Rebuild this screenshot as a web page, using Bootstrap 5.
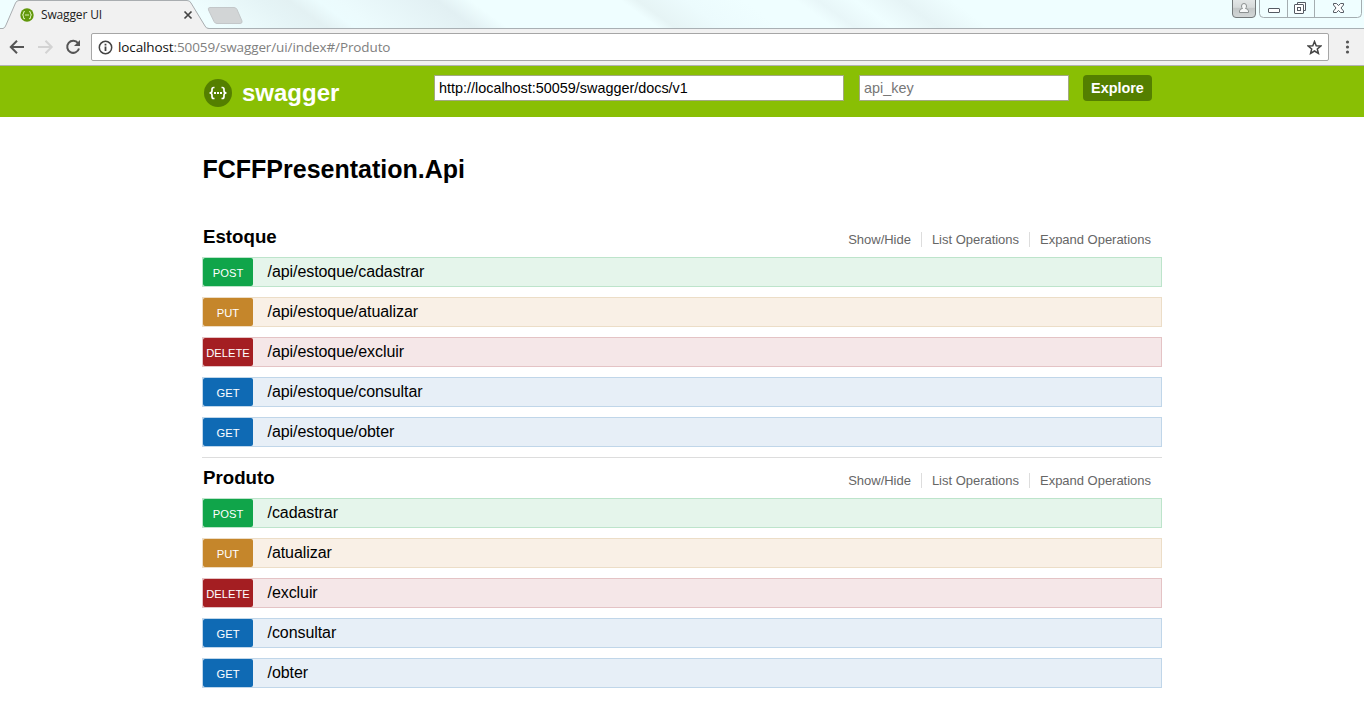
<!DOCTYPE html>
<html lang="pt-BR">
<head>
<meta charset="utf-8">
<meta name="viewport" content="width=device-width, initial-scale=1">
<title>Swagger UI</title>
<link href="https://cdn.jsdelivr.net/npm/bootstrap@5.3.0/dist/css/bootstrap.min.css" rel="stylesheet">
<style>
body{font-family:"Liberation Sans",Arial,sans-serif;color:#000;height:707px}
svg{display:block;flex:none}
.titlebar{height:29px;border-bottom:1px solid #a9b0b4;background:linear-gradient(36deg,#effeff 0,#effeff 130px,#e5f4f6 175px,#e3f1f3 192px,#ecfcfe 209px,#ecfbfd 220px,#e2f0f3 279px,#effeff 299px,#effeff 387px,#e6f4f5 397px,#ecfbfd 425px,#effeff 460px,#effeff 490px,#e8f6f8 503px,#effeff 525px,#e6f4f6 552px,#effeff 582px)}
.tab-shape{left:0;top:0}
.tab-label{font:12px "Open Sans","Noto Sans",sans-serif;letter-spacing:-.15px;left:41px;top:7px;line-height:16px;color:#222}
.win-buttons{left:1232px;top:0}
.toolbar{height:37px;background:#f1f1f1;border-bottom:1px solid #b3b3b3;padding:4px 9px 4px 9px}
.address{margin-left:10px;height:28px;border:1px solid #a6a6a6;border-radius:2px;padding:0 6px 0 6px;font:13.5px "Open Sans","Noto Sans",sans-serif;letter-spacing:-.11px;color:#808080}
.address b{font-weight:400;color:#111}
.url-text{margin-left:5px}
.site{width:960px;margin-left:202px}
.swagger-bar{height:51px;background:#89bf04;padding-top:9px}
.brand{margin-top:2px}
.brand-name{font-size:24px;font-weight:700;line-height:28px;margin:1px 0 0 10px;width:192px}
.field{height:26px;border:1px solid #a3a982;border-radius:0;padding:0 4px;font-size:14.4px;line-height:24px;color:#000}
.field::placeholder{color:#777}
.field-url{width:410px}
.field-key{width:210px;margin-left:15px}
.btn-explore{--bs-btn-color:#fff;--bs-btn-bg:#547f00;--bs-btn-border-width:0;margin-left:14px;width:69px;height:26px;padding:0;border-radius:4px;font-size:14.4px;font-weight:700;line-height:26px}
.api-title{font-size:25px;font-weight:700;line-height:30px;margin:37px 0 0 .5px}
.resource-head{height:40px;padding-right:1px}
.resource-head h2{font-size:18.7px;font-weight:700;line-height:22px;margin:9px 0 0 1px}
.options{font-size:13px;line-height:15px;color:#666;margin-top:15px;letter-spacing:-.02px}
.options li{padding:0 10px;border-left:1px solid #ddd}
.options li:first-child{border-left:0}
.first-resource{margin-top:33px}
.resource-line{border-top:1px solid #ddd;margin-top:10px}
.operation{height:30px;border:1px solid;margin-bottom:10px}
.operation:last-child{margin-bottom:0}
.verb{width:50px;height:28px;border-radius:2px;color:#fff;font-size:11.2px;line-height:30px}
.path{font-size:16px;letter-spacing:-.07px;line-height:27px;margin-left:14.500px}
.post{background:#e5f5eb;border-color:#bde4cb}.post .verb{background:#10a54a}
.put{background:#f9f0e6;border-color:#ecddc7}.put .verb{background:#c5862b}
.delete{background:#f5e7e8;border-color:#e4c3c5}.delete .verb{background:#a41e22}
.get{background:#e7eff7;border-color:#c0d6e9}.get .verb{background:#0f6ab4}
</style>
</head>
<body class="bg-white overflow-hidden">
<header>
  <div class="titlebar position-relative">
    <svg class="tab-shape position-absolute" width="250" height="29" viewBox="0 0 250 29">
      <path d="M0 28.5H3Q5 28 6 25L15.500 3Q16.500.5 19 .5H187Q190 .5 191 3L205 26Q206 28.500 209 28.500V29H0Z" fill="#f1f1f1"/>
      <path d="M0 28.500H3Q5 28 6 25L15.500 3Q16.500.5 19 .5H187Q190 .5 191 3L205 26Q206 28.500 209 28.500" fill="none" stroke="#a9adb0"/>
      <path d="M210 7.500H234Q236 7.500 237 9.500L242 21Q242.500 23.500 240 23.500H217Q215 23.500 214 21.500L208.500 10Q207.500 7.500 210 7.500Z" fill="#d2d5d6" stroke="#c3c7c9"/>
      <circle cx="27" cy="15" r="6.700" fill="#62980b"/>
      <path d="M25 11.500Q23.500 11.500 23.500 13T22.300 15Q23.500 15 23.500 17T25 18.500M29 11.500Q30.500 11.500 30.500 13T31.700 15Q30.500 15 30.500 17T29 18.500M25 15H29" fill="none" stroke="#d8edb2" stroke-width="1.100"/>
      <path d="M184.500 11.500L191.500 18.500M191.500 11.500L184.500 18.500" stroke="#444" stroke-width="1.700"/>
    </svg>
    <span class="tab-label position-absolute">Swagger UI</span>
    <svg class="win-buttons position-absolute" width="132" height="20" viewBox="0 0 132 20">
      <defs><linearGradient id="userFill" x1="0" y1="0" x2="0" y2="1"><stop offset="0" stop-color="#e4e8e8"/><stop offset=".45" stop-color="#d6dada"/><stop offset=".5" stop-color="#c3c7c7"/><stop offset="1" stop-color="#d4d8d8"/></linearGradient></defs>
      <path d="M.5-1V14Q.5 17.500 4 17.500H20Q23.500 17.500 23.500 14V-1Z" fill="url(#userFill)" stroke="#73797a"/>
      <path d="M7.500 12.500V11Q8 8.500 10.500 8.500Q9.500 7.500 9.500 6Q9.500 3.500 12 3.500T14.500 6Q14.500 7.500 13.500 8.500Q16 8.500 16.500 11V12.500Z" fill="#f6f8f8" stroke="#8b9090"/>
      <path d="M27.500-1V13.500Q27.500 17.500 31.500 17.500H125.500Q129.500 17.500 129.500 13.500V-1M55.500 0V17M82.500 0V17" fill="none" stroke="#a4adb0"/>
      <rect x="36.500" y="8.500" width="11" height="4" rx=".5" fill="#fff" stroke="#555b63"/>
      <path d="M65.500 4.500V2.500H73.500V10.500H71.500" fill="#fff" stroke="#555b63"/>
      <rect x="62.500" y="4.500" width="9" height="9" rx=".5" fill="#fff" stroke="#555b63"/><rect x="65.500" y="7.500" width="3" height="3" fill="none" stroke="#555b63"/>
      <path d="M101.500 3.500H104.500L106.500 5.600L108.500 3.500H111.500V5L109 8L111.500 11V12.500H108.500L106.500 10.400L104.500 12.500H101.500V11L104 8L101.500 5Z" fill="#fff" stroke="#555b63"/>
    </svg>
  </div>
  <div class="toolbar d-flex align-items-center">
    <svg width="15" height="16" viewBox="0 0 15 16"><path d="M15 8H2M8 1.800L1.800 8L8 14.200" fill="none" stroke="#555" stroke-width="2"/></svg>
    <svg class="ms-3" width="13" height="16" viewBox="0 0 13 16" overflow="visible"><path d="M-2 8H11M5.500 1.800L11.700 8L5.500 14.200" fill="none" stroke="#d3d3d3" stroke-width="2"/></svg>
    <svg class="ms-2 ps-1" width="20" height="16" viewBox="0 0 16 16"><path d="M13 4.200A6 6 0 1 0 14 9.500" fill="none" stroke="#555" stroke-width="2"/><path d="M15 1V7H9Z" fill="#555"/></svg>
    <div class="address bg-white d-flex align-items-center flex-grow-1">
      <svg width="15" height="15" viewBox="0 0 15 15"><circle cx="7.500" cy="7.500" r="6.200" fill="none" stroke="#444" stroke-width="1.500"/><path d="M7.500 6.500V11M7.500 3.800V5.400" stroke="#444" stroke-width="1.800"/></svg>
      <span class="url-text"><b>localhost</b>:50059/swagger/ui/index#/Produto</span>
      <svg class="ms-auto" width="15" height="15" viewBox="0 0 15 15"><path d="M7.500 1.500L9.200 5.700L13.800 6L10.300 9L11.400 13.400L7.500 11L3.600 13.400L4.700 9L1.200 6L5.800 5.700Z" fill="none" stroke="#444" stroke-width="1.500"/></svg>
    </div>
    <svg class="ms-3" width="10" height="14" viewBox="0 0 10 14"><g fill="#555"><circle cx="2.500" cy="2" r="1.600"/><circle cx="2.500" cy="7" r="1.600"/><circle cx="2.500" cy="12" r="1.600"/></g></svg>
  </div>
</header>
<nav class="swagger-bar">
  <div class="site d-flex align-items-start">
    <div class="brand d-flex align-items-center text-white">
      <svg width="30" height="30" viewBox="0 0 30 30"><circle cx="16" cy="16" r="14" fill="#547f00"/><g transform="translate(0 1)" fill="none" stroke="#fff" stroke-width="1.700"><path d="M12.500 9.500H11.700Q10 9.500 10 11.500V12.700Q10 15 7.500 15Q10 15 10 17.300V18.500Q10 20.500 11.700 20.500H12.500M19.500 9.500H20.300Q22 9.500 22 11.500V12.700Q22 15 24.500 15Q22 15 22 17.300V18.500Q22 20.500 20.300 20.500H19.500"/></g><g fill="#fff"><rect x="12" y="15" width="2" height="2"/><rect x="15" y="15" width="2" height="2"/><rect x="18" y="15" width="2" height="2"/></g></svg>
      <span class="brand-name">swagger</span>
    </div>
    <input class="field field-url bg-white" type="text" value="http://localhost:50059/swagger/docs/v1" aria-label="URL">
    <input class="field field-key bg-white" type="text" placeholder="api_key" aria-label="api_key">
    <button class="btn btn-explore" type="button">Explore</button>
  </div>
</nav>
<main class="site">
  <h1 class="api-title">FCFFPresentation.Api</h1>
  <section class="first-resource">
    <div class="resource-head d-flex justify-content-between"><h2>Estoque</h2><ul class="options list-unstyled d-flex mb-auto"><li>Show/Hide</li><li>List Operations</li><li>Expand Operations</li></ul></div>
    <div>
      <div class="operation post d-flex"><span class="verb text-center">POST</span><span class="path">/api/estoque/cadastrar</span></div>
      <div class="operation put d-flex"><span class="verb text-center">PUT</span><span class="path">/api/estoque/atualizar</span></div>
      <div class="operation delete d-flex"><span class="verb text-center">DELETE</span><span class="path">/api/estoque/excluir</span></div>
      <div class="operation get d-flex"><span class="verb text-center">GET</span><span class="path">/api/estoque/consultar</span></div>
      <div class="operation get d-flex"><span class="verb text-center">GET</span><span class="path">/api/estoque/obter</span></div>
    </div>
  </section>
  <section class="resource-line">
    <div class="resource-head d-flex justify-content-between"><h2>Produto</h2><ul class="options list-unstyled d-flex mb-auto"><li>Show/Hide</li><li>List Operations</li><li>Expand Operations</li></ul></div>
    <div>
      <div class="operation post d-flex"><span class="verb text-center">POST</span><span class="path">/cadastrar</span></div>
      <div class="operation put d-flex"><span class="verb text-center">PUT</span><span class="path">/atualizar</span></div>
      <div class="operation delete d-flex"><span class="verb text-center">DELETE</span><span class="path">/excluir</span></div>
      <div class="operation get d-flex"><span class="verb text-center">GET</span><span class="path">/consultar</span></div>
      <div class="operation get d-flex"><span class="verb text-center">GET</span><span class="path">/obter</span></div>
    </div>
  </section>
</main>
<script src="https://cdn.jsdelivr.net/npm/bootstrap@5.3.0/dist/js/bootstrap.bundle.min.js"></script>
</body>
</html>
